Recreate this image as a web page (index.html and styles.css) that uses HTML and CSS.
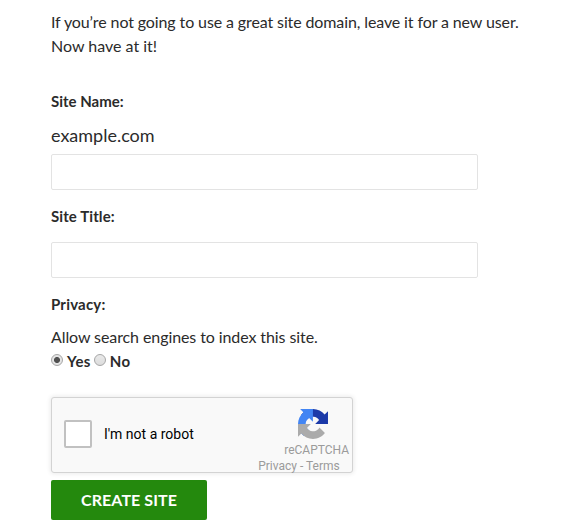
FILE: index.html
```html
<!DOCTYPE html>
<html lang="en">
<head>
<meta charset="utf-8">
<title>Create Site</title>
<link rel="stylesheet" href="styles.css">
</head>
<body>
<form class="signup">
  <p class="intro">If you’re not going to use a great site domain, leave it for a new user.<br><span class="intro-end">Now have at it!</span></p>
  <label class="label" for="name">Site Name:</label>
  <div class="domain">example.com</div>
  <input class="field" id="name" type="text">
  <label class="label label-title" for="title">Site Title:</label>
  <input class="field" id="title" type="text">
  <div class="label label-privacy">Privacy:</div>
  <p class="question">Allow search engines to index this site.</p>
  <div class="choices">
    <label class="choice"><input class="radio" type="radio" name="public" checked>Yes</label>
    <label class="choice"><input class="radio" type="radio" name="public">No</label>
  </div>
  <div class="captcha">
    <span class="checkbox"></span>
    <span class="robot">I'm not a robot</span>
    <div class="brand">
      <svg class="logo" viewBox="0 0 64 64">
        <path fill="#1c3aa9" d="M64 31.955l-.033-1.37V4.687l-7.16 7.16C50.948 4.674 42.033.093 32.05.093c-10.4 0-19.622 4.96-25.458 12.64l11.736 11.86a15.55 15.55 0 0 1 4.754-5.334c2.05-1.6 4.952-2.906 8.968-2.906.485 0 .86.057 1.135.163 4.976.393 9.288 3.14 11.828 7.124l-8.307 8.307L64 31.953"/>
        <path fill="#4285f4" d="M31.862.094l-1.37.033H4.594l7.16 7.16C4.58 13.147 0 22.06 0 32.046c0 10.4 4.96 19.622 12.64 25.458L24.5 45.768a15.55 15.55 0 0 1-5.334-4.754c-1.6-2.05-2.906-4.952-2.906-8.968 0-.485.057-.86.163-1.135.393-4.976 3.14-9.288 7.124-11.828l8.307 8.307L31.86.095"/>
        <path fill="#ababab" d="M.001 32.045l.033 1.37v25.898l7.16-7.16c5.86 7.173 14.774 11.754 24.76 11.754 10.4 0 19.622-4.96 25.458-12.64l-11.736-11.86a15.55 15.55 0 0 1-4.754 5.334c-2.05 1.6-4.952 2.906-8.968 2.906-.485 0-.86-.057-1.135-.163-4.976-.393-9.288-3.14-11.828-7.124l8.307-8.307c-10.522.04-22.4.066-27.295-.005"/>
      </svg>
      <div class="brand-name">reCAPTCHA</div>
      <div class="brand-links">Privacy - Terms</div>
    </div>
  </div>
  <button class="submit" type="button">CREATE SITE</button>
</form>
</body>
</html>
```
FILE: styles.css
```css
* { box-sizing: border-box; }
body {
  margin: 0;
  background: #fff;
  color: #2b2b2b;
  font: 16px/24px Lato, sans-serif;
}
.signup { padding: 10px 0 0 51px; }
.intro { margin: 0 0 31px; letter-spacing: -.115px; white-space: nowrap; }
.intro-end { letter-spacing: 0; }
.label {
  display: block;
  height: 24px;
  font-size: 15px;
  font-weight: 700;
}
.domain { margin-top: 10px; height: 31px; font-size: 18px; }
.field {
  display: block;
  width: 427px;
  height: 36px;
  padding: 8px 10px;
  border: 1px solid #e3e3e3;
  border-radius: 2px;
  background: #fff;
  outline: none;
}
.label-title { margin: 14px 0 14px; letter-spacing: .1px; }
.label-privacy { margin: 14px 0 9px; letter-spacing: .2px; }
.question { margin: 0; letter-spacing: -.09px; }
.choices { display: flex; gap: 3px; height: 24px; font-size: 15px; font-weight: 700; letter-spacing: .4px; }
.choice { display: flex; }
.radio {
  appearance: none;
  width: 12px;
  height: 12px;
  margin: 5px 4px 0 0;
  border: 1px solid #a6a6a6;
  border-radius: 50%;
  background: linear-gradient(#e9e9e9, #dcdcdc);
}
.radio:checked { background: radial-gradient(circle, #505050 0 2.6px, #e4e4e4 3.4px); }
.captcha {
  display: flex;
  width: 302px;
  height: 76px;
  margin-top: 24px;
  border: 1px solid #d3d3d3;
  border-radius: 3px;
  background: #f9f9f9;
  box-shadow: 0 0 4px 1px rgba(0, 0, 0, .08);
  font-family: Roboto, sans-serif;
}
.checkbox {
  width: 28px;
  height: 28px;
  margin: 22px 0 0 12px;
  border: 2px solid #c1c1c1;
  border-radius: 2px;
  background: #fff;
}
.robot { margin: 24px 0 0 12px; color: #000; font-size: 14px; }
.brand { margin-left: auto; color: #9b9b9b; font-size: 12px; line-height: 16px; }
.logo { display: block; width: 30px; height: 30px; margin: 11px 0 3px 40px; }
.brand-name { padding: 0 3px 0 26px; }
.brand-links { white-space: nowrap; }
.submit {
  display: block;
  width: 156px;
  height: 40px;
  margin-top: 7px;
  padding: 0;
  border: 0;
  border-radius: 2px;
  background: #24890d;
  color: #fff;
  font: 700 16px/40px Lato, sans-serif;
  letter-spacing: .08px;
}
```
